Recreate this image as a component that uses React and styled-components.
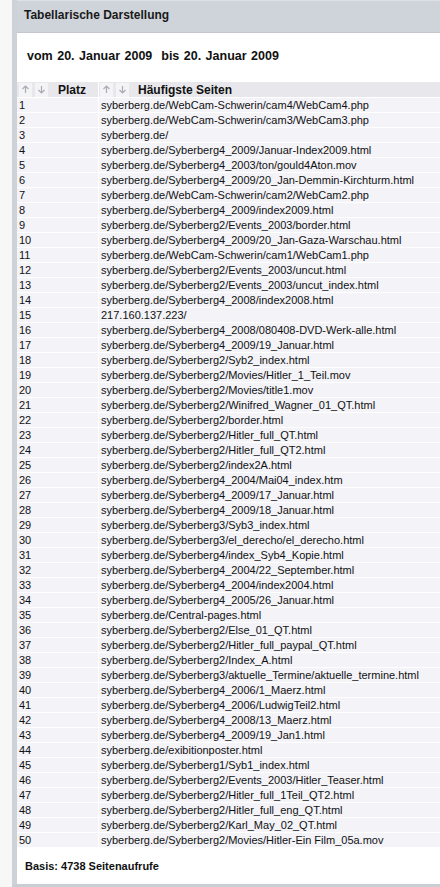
import React from "react";
import styled, {createGlobalStyle} from "styled-components";

const GlobalStyle = createGlobalStyle`
    html, body {
        margin: 0;
        padding: 0;
        background: #f7f7f7;
        font-family: "Liberation Sans", Arial, sans-serif;
    }
`

const Page = styled.div`
    width: 440px;
    height: 887px;
    padding-left: 12px;
    box-sizing: border-box;
    overflow: hidden;
`

const Panel = styled.div`
    background: #ffffff;
    border-left: 5px solid #cdd1d8;
    border-bottom: 3px solid #c9cdd4;
    height: 884px;
    display: flex;
    flex-direction: column;
`

const TitleBar = styled.div`
    height: 33px;
    box-sizing: border-box;
    background: #cfd3da;
    border-top: 1px solid #dde0e5;
    border-bottom: 1px solid #c4c8ce;
    padding: 7px 0 0 7px;
    font-size: 12px;
    font-weight: bold;
    color: #1a1a1a;
`

const DateLine = styled.div`
    height: 49px;
    box-sizing: border-box;
    padding: 16px 0 0 10px;
    font-size: 12.5px;
    font-weight: bold;
    color: #111;
    word-spacing: 1px;
`

const Table = styled.table`
    border-collapse: collapse;
    width: 100%;
    font-size: 11px;
    color: #111;
`

const HeadCell = styled.th`
    height: 15px;
    padding: 0;
    background: #e8e8ec;
    text-align: left;
    font-size: 12px;
    font-weight: bold;
    width: ${p => p.$w || "auto"};
    border-left: ${p => p.$divider ? "1px solid #ffffff" : "none"};
`

const HeadInner = styled.div`
    display: flex;
    align-items: center;
    gap: ${p => p.$gap}px;
    padding-left: ${p => p.$pad}px;
`

const Arrows = styled.div`
    display: flex;
    gap: 3px;
`

const ArrowBox = styled.span`
    width: 13px;
    height: 14px;
    background: #f4f4f6;
    display: flex;
    align-items: center;
    justify-content: center;
`

const Row = styled.tr`
    background: #f3f3f8;
    border-top: 1px solid #ffffff;
`

const Cell = styled.td`
    height: 14px;
    padding: 0 0 0 ${p => p.$pad}px;
    line-height: 14px;
    white-space: nowrap;
    border-left: ${p => p.$divider ? "1px solid #ffffff" : "none"};
`

const Footer = styled.div`
    padding: 13px 0 0 8px;
    font-size: 11px;
    font-weight: bold;
    color: #111;
`

const Arrow = ({down}) => (
    <svg width="9" height="9" viewBox="0 0 9 9">
        {down ? (
            <path d="M4.5 1V8M1.5 5L4.5 8L7.5 5" stroke="#a9acb3" strokeWidth="1.2" fill="none"/>
        ) : (
            <path d="M4.5 8V1M1.5 4L4.5 1L7.5 4" stroke="#a9acb3" strokeWidth="1.2" fill="none"/>
        )}
    </svg>
)

const SortArrows = () => (
    <Arrows>
        <ArrowBox><Arrow/></ArrowBox>
        <ArrowBox><Arrow down/></ArrowBox>
    </Arrows>
)

const pages = [
    "syberberg.de/WebCam-Schwerin/cam4/WebCam4.php",
    "syberberg.de/WebCam-Schwerin/cam3/WebCam3.php",
    "syberberg.de/",
    "syberberg.de/Syberberg4_2009/Januar-Index2009.html",
    "syberberg.de/Syberberg4_2003/ton/gould4Aton.mov",
    "syberberg.de/Syberberg4_2009/20_Jan-Demmin-Kirchturm.html",
    "syberberg.de/WebCam-Schwerin/cam2/WebCam2.php",
    "syberberg.de/Syberberg4_2009/index2009.html",
    "syberberg.de/Syberberg2/Events_2003/border.html",
    "syberberg.de/Syberberg4_2009/20_Jan-Gaza-Warschau.html",
    "syberberg.de/WebCam-Schwerin/cam1/WebCam1.php",
    "syberberg.de/Syberberg2/Events_2003/uncut.html",
    "syberberg.de/Syberberg2/Events_2003/uncut_index.html",
    "syberberg.de/Syberberg4_2008/index2008.html",
    "217.160.137.223/",
    "syberberg.de/Syberberg4_2008/080408-DVD-Werk-alle.html",
    "syberberg.de/Syberberg4_2009/19_Januar.html",
    "syberberg.de/Syberberg2/Syb2_index.html",
    "syberberg.de/Syberberg2/Movies/Hitler_1_Teil.mov",
    "syberberg.de/Syberberg2/Movies/title1.mov",
    "syberberg.de/Syberberg2/Winifred_Wagner_01_QT.html",
    "syberberg.de/Syberberg2/border.html",
    "syberberg.de/Syberberg2/Hitler_full_QT.html",
    "syberberg.de/Syberberg2/Hitler_full_QT2.html",
    "syberberg.de/Syberberg2/index2A.html",
    "syberberg.de/Syberberg4_2004/Mai04_index.htm",
    "syberberg.de/Syberberg4_2009/17_Januar.html",
    "syberberg.de/Syberberg4_2009/18_Januar.html",
    "syberberg.de/Syberberg3/Syb3_index.html",
    "syberberg.de/Syberberg3/el_derecho/el_derecho.html",
    "syberberg.de/Syberberg4/index_Syb4_Kopie.html",
    "syberberg.de/Syberberg4_2004/22_September.html",
    "syberberg.de/Syberberg4_2004/index2004.html",
    "syberberg.de/Syberberg4_2005/26_Januar.html",
    "syberberg.de/Central-pages.html",
    "syberberg.de/Syberberg2/Else_01_QT.html",
    "syberberg.de/Syberberg2/Hitler_full_paypal_QT.html",
    "syberberg.de/Syberberg2/Index_A.html",
    "syberberg.de/Syberberg3/aktuelle_Termine/aktuelle_termine.html",
    "syberberg.de/Syberberg4_2006/1_Maerz.html",
    "syberberg.de/Syberberg4_2006/LudwigTeil2.html",
    "syberberg.de/Syberberg4_2008/13_Maerz.html",
    "syberberg.de/Syberberg4_2009/19_Jan1.html",
    "syberberg.de/exibitionposter.html",
    "syberberg.de/Syberberg1/Syb1_index.html",
    "syberberg.de/Syberberg2/Events_2003/Hitler_Teaser.html",
    "syberberg.de/Syberberg2/Hitler_full_1Teil_QT2.html",
    "syberberg.de/Syberberg2/Hitler_full_eng_QT.html",
    "syberberg.de/Syberberg2/Karl_May_02_QT.html",
    "syberberg.de/Syberberg2/Movies/Hitler-Ein Film_05a.mov",
]

const App = () => {
    return (
        <Page>
            <GlobalStyle/>
            <Panel>
                <TitleBar>Tabellarische Darstellung</TitleBar>
                <DateLine>vom 20. Januar 2009 &nbsp;bis 20. Januar 2009</DateLine>
                <Table>
                    <thead>
                        <tr>
                            <HeadCell $w="81px">
                                <HeadInner $pad={2} $gap={10}><SortArrows/>Platz</HeadInner>
                            </HeadCell>
                            <HeadCell $divider>
                                <HeadInner $pad={1} $gap={9}><SortArrows/>Häufigste Seiten</HeadInner>
                            </HeadCell>
                        </tr>
                    </thead>
                    <tbody>
                        {pages.map((page, i) => (
                            <Row key={i}>
                                <Cell $pad={2}>{i + 1}</Cell>
                                <Cell $pad={2} $divider>{page}</Cell>
                            </Row>
                        ))}
                    </tbody>
                </Table>
                <Footer>Basis: 4738 Seitenaufrufe</Footer>
            </Panel>
        </Page>
    )
}

export default App;
